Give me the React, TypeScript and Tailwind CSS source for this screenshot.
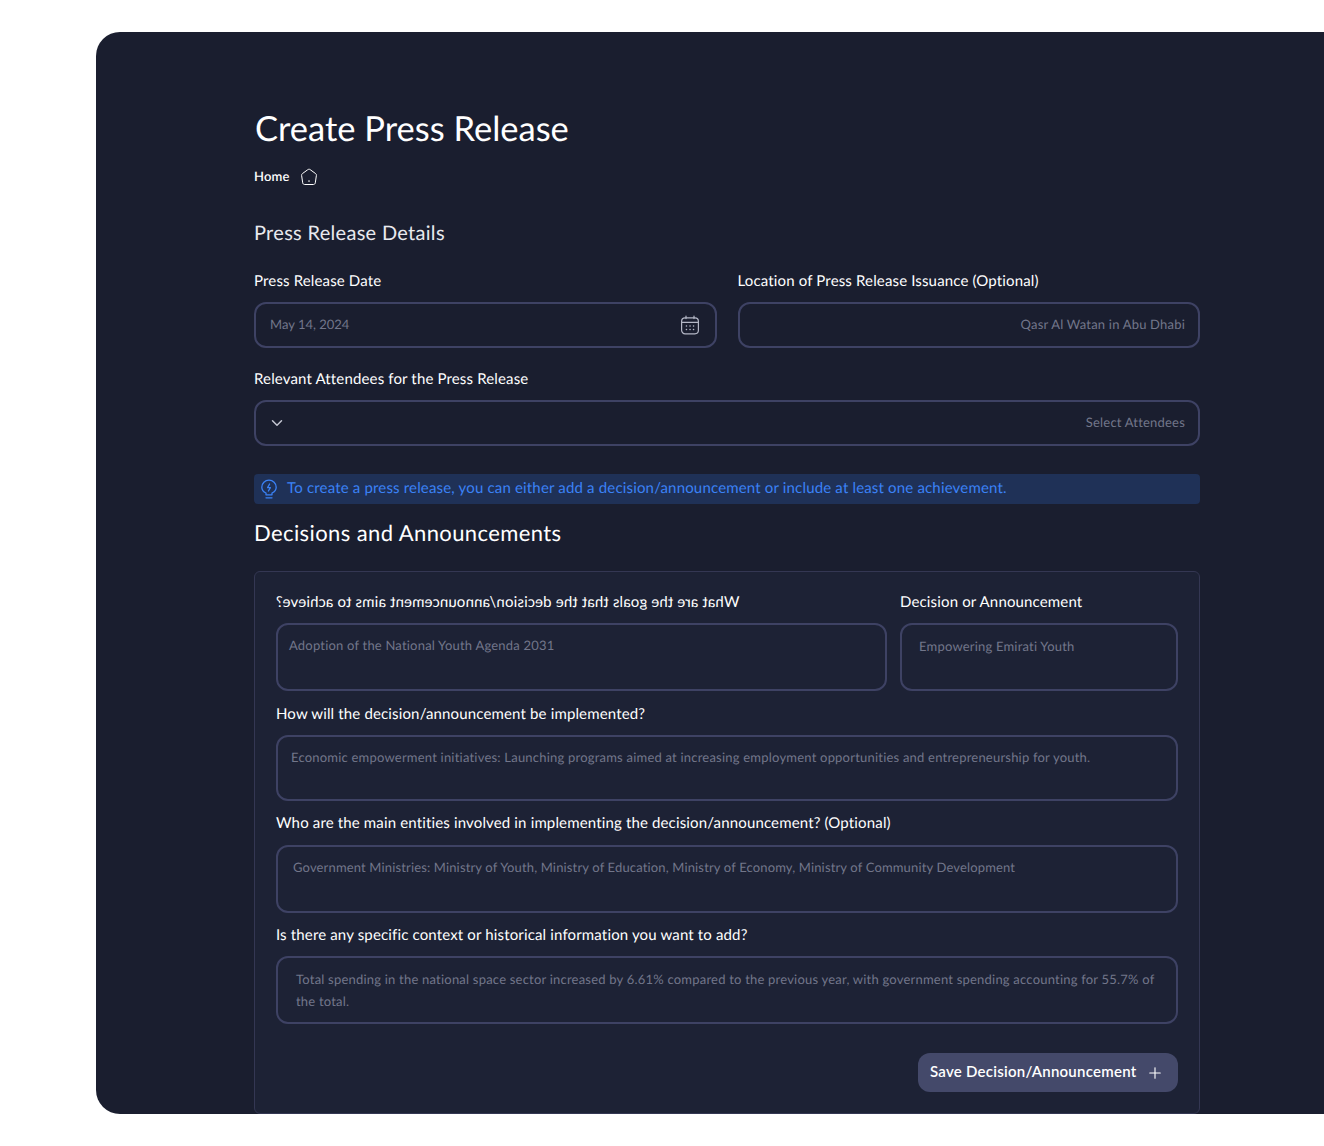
import { ChevronDown, Plus } from "lucide-react";

function Label({ children }: { children: React.ReactNode }) {
  return <p className="text-[15px] leading-5 tracking-[0.15px] text-white">{children}</p>;
}

function TextBox({ text, className }: { text: string; className: string }) {
  return (
    <div className={`rounded-xl border-2 border-[#3e4264] text-[13px] leading-[22px] text-[#72768a] ${className}`}>
      {text}
    </div>
  );
}

function HomeIcon() {
  return (
    <svg width="18" height="18" viewBox="0 0 18 18" fill="none" stroke="white" strokeWidth="1" strokeLinecap="round" strokeLinejoin="round">
      <path d="M7.9 1.6C8.6 1.1 9.4 1.1 10.1 1.6L15.6 5.6C16.2 6 16.5 6.7 16.4 7.4L15.3 14.8C15.2 15.8 14.4 16.5 13.4 16.5H4.6C3.6 16.5 2.8 15.8 2.7 14.8L1.6 7.4C1.5 6.7 1.8 6 2.4 5.6Z" />
      <path d="M9 12.6V13.6" />
    </svg>
  );
}

function CalendarIcon() {
  return (
    <svg width="20" height="20" viewBox="0 0 20 20" fill="none" stroke="#b4b7c6" strokeWidth="1.2" strokeLinecap="round">
      <rect x="1.6" y="2.8" width="16.8" height="16" rx="3.5" />
      <path d="M1.8 7.4H18.2M6 1V3.6M14 1V3.6" />
      <path d="M6.4 11H6.5M10 11H10.1M13.5 11H13.6M6.4 14.6H6.5M10 14.6H10.1M13.5 14.6H13.6" strokeWidth="1.5" />
    </svg>
  );
}

function BulbIcon() {
  return (
    <svg width="18" height="20" viewBox="0 0 18 20" fill="none" stroke="#3b82f6" strokeWidth="1.3" strokeLinecap="round" strokeLinejoin="round">
      <path d="M6 15.8V14C3.6 12.9 1.8 10.8 1.8 8.2 1.8 4.4 5 1.2 9 1.2s7.200 3.200 7.200 7c0 2.600-1.800 4.700-4.200 5.800v1.800Z" />
      <path d="M9.600 5 7.600 8.600h2.800L8.400 12" />
      <path d="M6 18.800h6" />
    </svg>
  );
}

export default function App() {
  return (
    <div className="h-[1146px] overflow-hidden bg-white pl-24 pt-8 font-['Lato',sans-serif] [text-rendering:geometricPrecision]">
      <main className="h-[1082px] overflow-hidden rounded-l-3xl bg-[#1a1e2f] pl-[158px] pt-[77px]">
        <div className="w-[946px]">
          <h1 className="pl-px text-[34.5px] leading-10 text-white">Create Press Release</h1>

          <div className="mt-[18px] flex h-5 items-center gap-2.5">
            <span className="text-[13px] font-semibold tracking-[0.2px] text-white">Home</span>
            <HomeIcon />
          </div>

          <h2 className="mt-[33px] h-[26px] text-[20px] leading-[26px] tracking-[0.3px] text-[#e8e9ee]">Press Release Details</h2>

          <div className="mt-[25px] grid grid-cols-2 gap-x-[21px]">
            <div>
              <Label>Press Release Date</Label>
              <div className="mt-[11px] flex h-[46px] items-center justify-between rounded-xl border-2 border-[#3e4264] pl-3.5 pr-[15px] text-[13px] text-[#72768a]">
                <span>May 14, 2024</span>
                <CalendarIcon />
              </div>
            </div>
            <div>
              <Label>Location of Press Release Issuance (Optional)</Label>
              <div className="mt-[11px] flex h-[46px] items-center justify-end rounded-xl border-2 border-[#3e4264] pr-[13px] text-[13px] tracking-[0.2px] text-[#72768a]">
                Qasr Al Watan in Abu Dhabi
              </div>
            </div>
          </div>

          <div className="mt-[21px]">
            <Label>Relevant Attendees for the Press Release</Label>
            <div className="mt-[11px] flex h-[46px] items-center justify-between rounded-xl border-2 border-[#3e4264] pl-3 pr-[13px] text-[13px] tracking-[0.2px] text-[#72768a]">
              <ChevronDown className="h-[18px] w-[18px] text-[#c4c6d2]" strokeWidth={2} />
              <span>Select Attendees</span>
            </div>
          </div>

          <div className="mt-7 flex h-[30px] items-center gap-[9px] rounded-sm bg-[#1f3157] pl-1.5 text-[15px] tracking-[0.17px] text-[#3b82f6]">
            <BulbIcon />
            <span className="pb-0.5">To create a press release, you can either add a decision/announcement or include at least one achievement.</span>
          </div>

          <h2 className="mt-4 h-[26px] text-[22px] leading-[26px] tracking-[0.4px] text-white">Decisions and Announcements</h2>

          <section className="mt-[25px] h-[543px] rounded-md border border-[#343753] bg-[#1d2235] px-[21px] pt-5">
            <div className="grid grid-cols-[611px_278px] gap-x-[13px]">
              <div>
                <p className="w-max -scale-x-100 text-[15px] leading-5 tracking-[0.15px] text-white">What are the goals that the decision/announcement aims to achieve?</p>
                <TextBox text="Adoption of the National Youth Agenda 2031" className="mt-[11px] h-[68px] pl-[11px] pt-[9px] tracking-[0.2px]" />
              </div>
              <div>
                <Label>Decision or Announcement</Label>
                <TextBox text="Empowering Emirati Youth" className="mt-[11px] h-[68px] pl-[17px] pt-2.5 tracking-[0.2px]" />
              </div>
            </div>

            <div className="mt-[13px]">
              <Label>How will the decision/announcement be implemented?</Label>
              <TextBox text="Economic empowerment initiatives: Launching programs aimed at increasing employment opportunities and entrepreneurship for youth." className="mt-[11px] h-[66px] pl-[13px] pt-[9px] tracking-[0.21px]" />
            </div>

            <div className="mt-3">
              <Label>Who are the main entities involved in implementing the decision/announcement? (Optional)</Label>
              <TextBox text="Government Ministries: Ministry of Youth, Ministry of Education, Ministry of Economy, Ministry of Community Development" className="mt-3 h-[68px] pl-[15px] pt-[9px] tracking-[0.15px]" />
            </div>

            <div className="mt-3">
              <Label>Is there any specific context or historical information you want to add?</Label>
              <TextBox text="Total spending in the national space sector increased by 6.61% compared to the previous year, with government spending accounting for 55.7% of the total." className="mt-[11px] h-[68px] pl-[18px] pr-5 pt-2.5 tracking-[0.21px]" />
            </div>

            <div className="mt-[29px] flex justify-end">
              <button className="flex h-[39px] w-[260px] items-center justify-between rounded-xl bg-[#44496a] pb-0.5 pl-3 pr-3.5 text-[15px] font-semibold tracking-[0.25px] text-white">
                Save Decision/Announcement
                <Plus className="mt-0.5 h-[18px] w-[18px]" strokeWidth={1.5} />
              </button>
            </div>
          </section>
        </div>
      </main>
    </div>
  );
}
